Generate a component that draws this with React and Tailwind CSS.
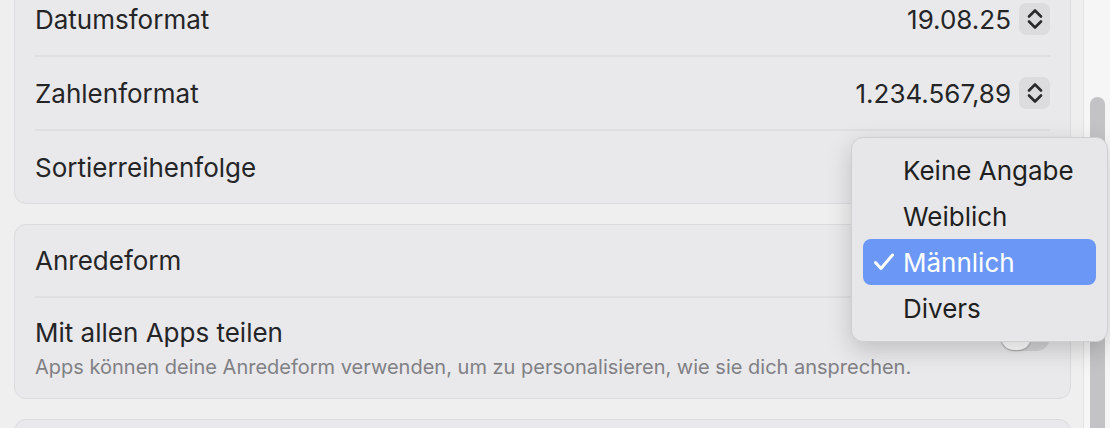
import React from "react";

function Stepper() {
  return (
    <div className="ml-2 flex h-[32px] w-[31px] items-center justify-center rounded-[7px] bg-[#dcdcde]">
      <svg width="18" height="24" viewBox="0 0 18 24" fill="none">
        <path d="M3 9.5 L9 3.5 L15 9.5" stroke="#2a2a2c" strokeWidth="2.6" strokeLinecap="round" strokeLinejoin="round" />
        <path d="M3 14.5 L9 20.5 L15 14.5" stroke="#2a2a2c" strokeWidth="2.6" strokeLinecap="round" strokeLinejoin="round" />
      </svg>
    </div>
  );
}

function Row({ label, children, last }) {
  return (
    <div className="px-[20px]">
      <div className={"flex items-center justify-between " + (last ? "h-[72px]" : "h-[74px] border-b-2 border-[#dfdfe1]")}>
        <span>{label}</span>
        <div className="flex items-center">{children}</div>
      </div>
    </div>
  );
}

function Menu() {
  const items = ["Keine Angabe", "Weiblich", "Männlich", "Divers"];
  return (
    <div className="absolute left-[851px] top-[137px] w-[257px] rounded-[12px] border border-[#cfcfd2] bg-[#e7e7e9] px-[11px] pt-[9px] pb-[10px] shadow-[0_8px_24px_rgba(0,0,0,0.18)]">
      {items.map((it) => {
        const sel = it === "Männlich";
        return (
          <div
            key={it}
            className={
              "flex h-[46px] items-center rounded-[8px] pl-[10px] " +
              (sel ? "bg-[#6b98f6] text-white" : "text-[#1f1f21]")
            }
          >
            <span className="flex w-[30px] items-center">
              {sel && (
                <svg width="22" height="20" viewBox="0 0 22 20" fill="none">
                  <path d="M2.5 10.5 L8 16.5 L19.5 3" stroke="white" strokeWidth="3" strokeLinecap="round" strokeLinejoin="round" />
                </svg>
              )}
            </span>
            <span>{it}</span>
          </div>
        );
      })}
    </div>
  );
}

export default function App() {
  return (
    <div
      className="relative flex h-[428px] w-[1110px] overflow-hidden bg-[#efeff0] text-[26px] text-[#252527]"
      style={{ fontFamily: "Inter, 'Noto Sans', sans-serif" }}
    >
      <div className="w-[1083px] pl-[14px] pr-[12px]">
        <div className="-mt-[18px] rounded-[12px] border border-[#dcdcde] bg-[#e9e9eb]">
          <Row label="Datumsformat">
            <span>19.08.25</span>
            <Stepper />
          </Row>
          <Row label="Zahlenformat">
            <span>1.234.567,89</span>
            <Stepper />
          </Row>
          <Row label="Sortierreihenfolge" last />
        </div>

        <div className="mt-[20px] rounded-[12px] border border-[#dcdcde] bg-[#e9e9eb]">
          <div className="px-[20px]">
            <div className="flex h-[73px] items-center border-b-2 border-[#dfdfe1]">
              <span>Anredeform</span>
            </div>
          </div>
          <div className="flex h-[100px] items-center justify-between px-[20px]">
            <div className="flex flex-col pt-[4px]">
              <span className="leading-[32px]">Mit allen Apps teilen</span>
              <span className="mt-[2px] text-[20px] leading-[32px] text-[#808085]">
                Apps können deine Anredeform verwenden, um zu personalisieren, wie sie dich ansprechen.
              </span>
            </div>
            <div className="relative -mt-[22px] h-[28px] w-[50px] rounded-full bg-[#d3d3d5]">
              <div className="absolute left-[1px] top-[1px] h-[26px] w-[30px] rounded-full bg-white shadow-[0_1px_2px_rgba(0,0,0,0.25)]" />
            </div>
          </div>
        </div>

        <div className="mt-[20px] h-[60px] rounded-[12px] border border-[#dcdcde] bg-[#e9e9eb]" />
      </div>

      <div className="relative flex-1 border-l border-[#e1e1e3] bg-[#f6f6f6]">
        <div className="absolute left-[6px] top-[97px] h-[400px] w-[15px] rounded-full bg-[#c3c3c5]" />
      </div>

      <Menu />
    </div>
  );
}
